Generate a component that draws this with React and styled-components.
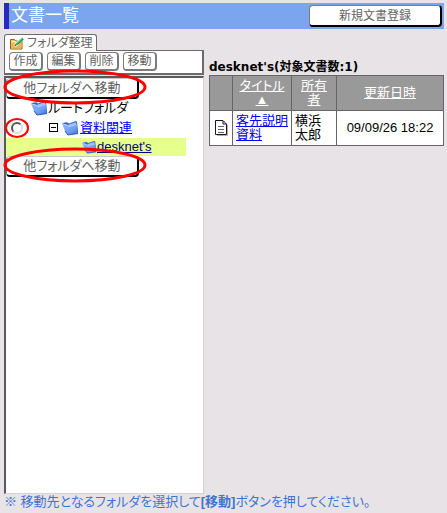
import { useState } from 'react';
import styled, { createGlobalStyle } from 'styled-components';

const COLORS = {
  page: '#e8e3e7',
  bar: '#7ba5ef',
  barEdge: '#2929bd',
  panelLine: '#6b6b6b',
  buttonText: '#636363',
  tableHead: '#999999',
  tableLine: '#666666',
  link: '#0000ff',
  visited: '#000084',
  selected: '#e7ff8c',
  note: '#3f74cf',
  mark: '#ff0000',
};

const FONT = `'Liberation Sans', 'Noto Sans CJK JP', sans-serif`;

const App = () => {
  const [target, setTarget] = useState('');

  return (
    <Page>
      <GlobalStyle />
      <TitleBar>
        <Title>文書一覧</Title>
        <NewButton type="button">新規文書登録</NewButton>
      </TitleBar>
      <Content>
        <Sidebar>
          <Tab>
            <EditFolderIcon />
            フォルダ整理
          </Tab>
          <Toolbar>
            <ToolButton type="button">作成</ToolButton>
            <ToolButton type="button">編集</ToolButton>
            <ToolButton type="button">削除</ToolButton>
            <ToolButton type="button">移動</ToolButton>
          </Toolbar>
          <Tree>
            <MoveAction />
            <TreeRow $indent={25}>
              <FolderIcon />
              ルートフォルダ
            </TreeRow>
            <TreeRow $indent={5} $tall>
              <Marked>
                <Radio
                  type="radio"
                  name="target"
                  aria-label="資料関連"
                  checked={target === 'materials'}
                  onChange={() => setTarget('materials')}
                />
                <RadioRing viewBox="0 0 26 22" aria-hidden="true">
                  <ellipse cx="13" cy="11" rx="11" ry="9" />
                </RadioRing>
              </Marked>
              <Collapse type="button" aria-label="閉じる">
                <svg width="9" height="9" viewBox="0 0 9 9" shapeRendering="crispEdges">
                  <path d="M.5.5h8v8h-8zM2 4.5h5" fill="none" stroke="#000" />
                </svg>
              </Collapse>
              <FolderIcon />
              <FolderLink href="#materials">資料関連</FolderLink>
            </TreeRow>
            <SelectedRow $indent={76}>
              <FolderIcon $small />
              <SelectedLink href="#desknets">desknet's</SelectedLink>
            </SelectedRow>
            <MoveAction />
          </Tree>
        </Sidebar>
        <Main>
          <Heading>desknet's(対象文書数:1)</Heading>
          <Table>
            <colgroup>
              <col width="23" />
              <col width="59" />
              <col width="45" />
              <col />
            </colgroup>
            <thead>
              <tr>
                <HeadCell />
                <HeadCell>
                  <SortLink href="#title">タイトル<br />▲</SortLink>
                </HeadCell>
                <HeadCell>
                  <SortLink href="#owner">所有<br />者</SortLink>
                </HeadCell>
                <HeadCell>
                  <SortLink href="#updated">更新日時</SortLink>
                </HeadCell>
              </tr>
            </thead>
            <tbody>
              <tr>
                <Cell $center><DocumentIcon /></Cell>
                <Cell><FileLink href="#document">客先説明資料</FileLink></Cell>
                <Cell>横浜<br />太郎</Cell>
                <Cell $center>09/09/26 18:22</Cell>
              </tr>
            </tbody>
          </Table>
        </Main>
      </Content>
      <Note>
        ※ 移動先となるフォルダを選択して<b>[移動]</b>ボタンを押してください。
      </Note>
    </Page>
  );
};

const MoveAction = () => (
  <Marked>
    <MoveButton type="button">他フォルダへ移動</MoveButton>
    <ButtonRing viewBox="0 0 144 36" aria-hidden="true">
      <ellipse cx="72" cy="18" rx="70" ry="16" />
    </ButtonRing>
  </Marked>
);

const FolderIcon = ({ $small }) => (
  <IconSvg width={$small ? 15 : 17} height={$small ? 14 : 16} viewBox="0 0 17 16" aria-hidden="true">
    <defs>
      <linearGradient id="folder" x1="0" y1="0" x2="1" y2="1">
        <stop offset="0" stopColor="#8fb8f8" />
        <stop offset=".55" stopColor="#74a2f3" />
        <stop offset="1" stopColor="#3d6fd6" />
      </linearGradient>
    </defs>
    <path d="M0 3 5 2.200 7 3.500 14 1l1 1 1.200 11-2 1z" fill="#2f62c4" />
    <path d="M6.500 4.500 13.800 2.200 15 6 6 7.500z" fill="#9fc3fa" />
    <path d="M0 3.500 5 4.500 7 6l7.500-2.500L16 13.500 6 15 3 11z" fill="url(#folder)" />
    <path d="m1 4 4 1.200 2 1.500 7-2.200" stroke="#b4d1ff" fill="none" />
    <path d="m3 11 3 4 10-1.500" stroke="#2a59b9" fill="none" />
  </IconSvg>
);

const EditFolderIcon = () => (
  <IconSvg width="16" height="15" viewBox="0 0 16 15" aria-hidden="true">
    <path d="M1.500 3.500h4l1 1.500h6.500v8H1.500z" fill="#ffce63" stroke="#8f6327" />
    <path d="M2 7h10.500v5.500H2z" fill="#f2b450" />
    <path d="M3 5.500h4" stroke="#fff0b5" />
    <path d="m5.500 10 1-3 6.500-6 2 2-6.500 6.500z" fill="#35b558" stroke="#fff" />
    <path d="m7.500 7 6-5.500" stroke="#8be89b" />
    <path d="m9 8.500 5.500-5.500" stroke="#12762f" />
    <path d="m5.500 10 .7-2 1.300 1.300z" fill="#333" />
  </IconSvg>
);

const DocumentIcon = () => (
  <DocumentSvg width="13" height="16" viewBox="0 0 13 16" aria-hidden="true">
    <path d="M2 15.500h10.500V5" fill="none" stroke="#b5adb5" />
    <path d="M.5.500h7.500l3.500 3.500v10.500H.5z" fill="#fff" stroke="#21101f" />
    <path d="M8 1v3h3" fill="none" stroke="#21101f" />
    <path d="M3 6.500h6M3 9.500h6M3 12.500h6" stroke="#666" />
  </DocumentSvg>
);

const GlobalStyle = createGlobalStyle`
  * {
    box-sizing: border-box;
  }

  body {
    margin: 0;
    background-color: ${COLORS.page};
    font-family: ${FONT};
    font-size: 13px;
    line-height: 14px;
    font-feature-settings: "palt";
  }
`;

const Page = styled.div`
  min-height: 100vh;
  padding: 3px 3px 3px 4px;
  display: flex;
  flex-direction: column;
`;

const TitleBar = styled.header`
  display: flex;
  align-items: center;
  justify-content: space-between;
  height: 26px;
  padding: 0 2px;
  border-left: 5px solid ${COLORS.barEdge};
  background-color: ${COLORS.bar};
`;

const Title = styled.h1`
  margin: 0;
  color: white;
  font-size: 17px;
  font-weight: 400;
  line-height: 24px;
`;

const Button = styled.button`
  padding: 0;
  border: 1px solid #7b7b7b;
  border-radius: 4px;
  background-color: white;
  color: ${COLORS.buttonText};
  font-family: inherit;
  font-size: 12px;
  line-height: 16px;
  font-feature-settings: inherit;
  white-space: nowrap;
  cursor: pointer;
`;

const NewButton = styled(Button)`
  width: 133px;
  height: 22px;
  border-bottom: 2px solid black;
  border-right: 2px solid black;
`;

const ToolButton = styled(Button)`
  width: 34px;
  height: 19px;
  border-right-width: 2px;
  border-bottom-width: 2px;
`;

const MoveButton = styled(Button)`
  display: block;
  width: 133px;
  height: 21px;
  border-width: 1px 2px 2px 1px;
  border-color: #c6c6c6 black black #7b7b7b;
  font-size: 13px;
`;

const Content = styled.div`
  flex: 1;
  display: flex;
  gap: 5px;
  padding-top: 5px;
`;

const Sidebar = styled.section`
  flex: 0 0 200px;
  display: flex;
  flex-direction: column;
`;

const Tab = styled.div`
  align-self: flex-start;
  display: flex;
  align-items: center;
  gap: 2px;
  height: 17px;
  margin-bottom: -1px;
  padding: 0 3px 0 4px;
  border: 1px solid ${COLORS.panelLine};
  border-bottom: 0;
  border-radius: 3px 3px 0 0;
  background-color: white;
  color: ${COLORS.buttonText};
  font-size: 12px;
  z-index: 1;
`;

const Toolbar = styled.div`
  display: flex;
  gap: 4px;
  height: 25px;
  padding: 1px 4px;
  border: 1px solid ${COLORS.panelLine};
  border-right-width: 2px;
  border-bottom-width: 2px;
  background-color: white;
`;

const Tree = styled.div`
  flex: 1;
  margin-top: 1px;
  border: 1px solid;
  border-width: 2px 1px 1px 2px;
  border-color: #5a5a5a #d6d3ce #d6d3ce #5a5a5a;
  background-color: white;
`;

const Marked = styled.div`
  position: relative;
  width: fit-content;
`;

const Ring = styled.svg`
  position: absolute;
  fill: none;
  stroke: ${COLORS.mark};
  stroke-width: 3px;
  pointer-events: none;
  z-index: 2;
`;

const ButtonRing = styled(Ring)`
  top: -9px;
  left: -3px;
  width: 144px;
  height: 36px;
`;

const RadioRing = styled(Ring)`
  top: -5px;
  left: -7px;
  width: 26px;
  height: 22px;
  stroke-width: 2px;
`;

const TreeRow = styled.div`
  display: flex;
  align-items: center;
  height: ${props => props.$tall ? 21 : 18}px;
  padding-left: ${props => props.$indent}px;
`;

const SelectedRow = styled(TreeRow)`
  width: 180px;
  background-color: ${COLORS.selected};
`;

const Radio = styled.input`
  display: block;
  appearance: none;
  width: 12px;
  height: 12px;
  margin: 0;
  border: 2px solid;
  border-color: #555 #deded6 #deded6 #555;
  border-radius: 50%;

  &:checked {
    background: radial-gradient(black 2px, white 3px);
  }
`;

const Collapse = styled.button`
  display: flex;
  margin: 0 4px 0 26px;
  padding: 0;
  border: 0;
  background: none;
`;

const FileLink = styled.a`
  color: ${COLORS.link};
`;

const FolderLink = styled(FileLink)`
  margin-left: 1px;
`;

const SelectedLink = styled.a`
  color: ${COLORS.visited};
`;

const IconSvg = styled.svg`
  flex: none;
`;

const DocumentSvg = styled.svg`
  display: block;
  margin: 0 auto;
`;

const Main = styled.main`
  flex: 1;
  padding-top: 26px;
`;

const Heading = styled.h2`
  margin: 0;
  font-family: 'DejaVu Sans', 'Noto Sans CJK JP', sans-serif;
  font-size: 12px;
  line-height: 15px;
  white-space: nowrap;
`;

const Table = styled.table`
  width: 100%;
  table-layout: fixed;
  border-collapse: collapse;
`;

const HeadCell = styled.th`
  height: 35px;
  padding: 2px;
  border: 1px solid ${COLORS.tableLine};
  background-color: ${COLORS.tableHead};
  font-weight: 400;
`;

const Cell = styled.td`
  height: 35px;
  padding: 2px 3px;
  border: 1px solid ${COLORS.tableLine};
  background-color: white;
  text-align: ${props => props.$center ? 'center' : 'left'};
`;

const SortLink = styled.a`
  color: white;
`;

const Note = styled.p`
  margin: 0;
  color: ${COLORS.note};
  line-height: 16px;
`;

export default App;
